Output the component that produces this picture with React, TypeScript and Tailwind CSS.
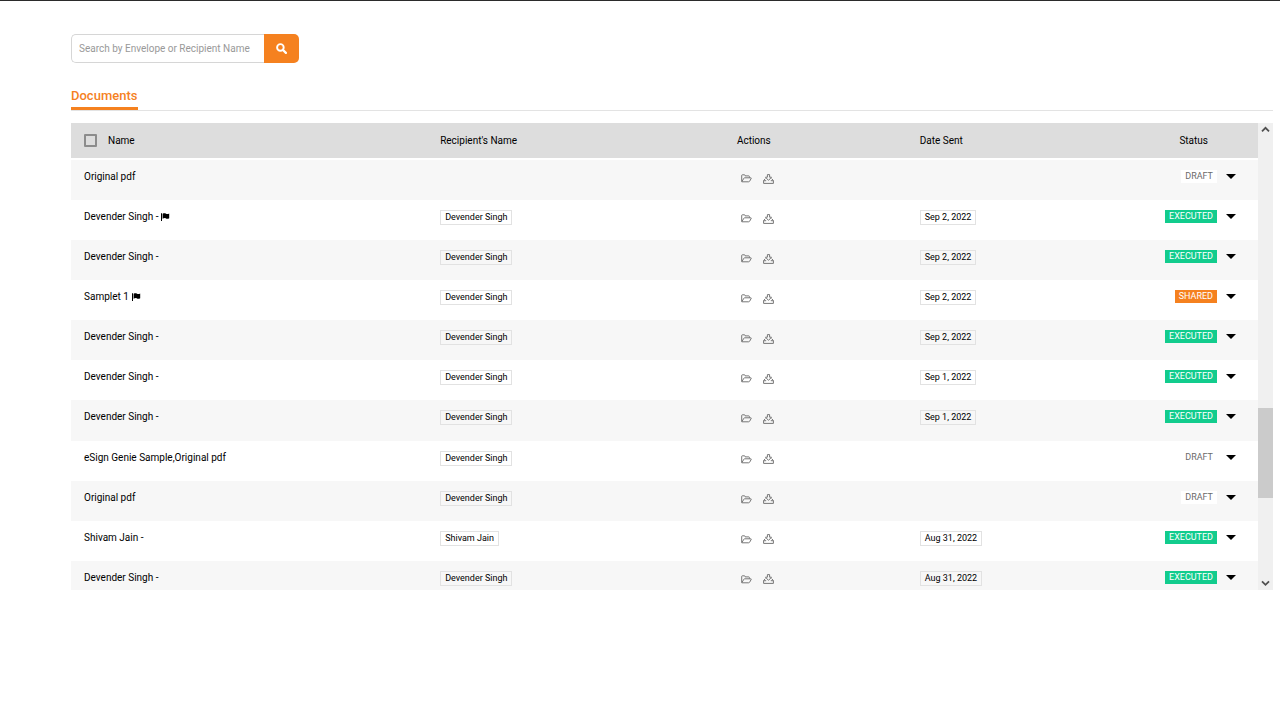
import { useState } from "react";

type Status = "DRAFT" | "EXECUTED" | "SHARED";
type Doc = { name: string; flagged?: boolean; recipient?: string; sent?: string; status: Status };

const DOCS: Doc[] = [
  { name: "Original pdf", status: "DRAFT" },
  { name: "Devender Singh -", flagged: true, recipient: "Devender Singh", sent: "Sep 2, 2022", status: "EXECUTED" },
  { name: "Devender Singh -", recipient: "Devender Singh", sent: "Sep 2, 2022", status: "EXECUTED" },
  { name: "Samplet 1", flagged: true, recipient: "Devender Singh", sent: "Sep 2, 2022", status: "SHARED" },
  { name: "Devender Singh -", recipient: "Devender Singh", sent: "Sep 2, 2022", status: "EXECUTED" },
  { name: "Devender Singh -", recipient: "Devender Singh", sent: "Sep 1, 2022", status: "EXECUTED" },
  { name: "Devender Singh -", recipient: "Devender Singh", sent: "Sep 1, 2022", status: "EXECUTED" },
  { name: "eSign Genie Sample,Original pdf", recipient: "Devender Singh", status: "DRAFT" },
  { name: "Original pdf", recipient: "Devender Singh", status: "DRAFT" },
  { name: "Shivam Jain -", recipient: "Shivam Jain", sent: "Aug 31, 2022", status: "EXECUTED" },
  { name: "Devender Singh -", recipient: "Devender Singh", sent: "Aug 31, 2022", status: "EXECUTED" },
];

const STATUS_STYLES: Record<Status, string> = {
  DRAFT: "bg-white text-[#6b6b6b]",
  EXECUTED: "bg-[#12cc8d] text-white",
  SHARED: "bg-[#f5811f] text-white",
};

function SearchIcon() {
  return (
    <svg width="11" height="11" viewBox="0 0 11 11" fill="none" stroke="currentColor" aria-hidden="true">
      <circle cx="4.4" cy="4.4" r="3.3" strokeWidth="1.9" />
      <path d="M7 7l2.9 2.9" strokeWidth="2.2" strokeLinecap="round" />
    </svg>
  );
}

function FlagIcon() {
  return (
    <svg width="9" height="9" viewBox="0 0 9 9" fill="currentColor" role="img" aria-label="Flagged">
      <path d="M0 .3h1v7.600H0z" />
      <path d="M1.600.8C2.900 0 4.100.2 5 .7c1 .5 2 .4 3.200-.3v4.800c-1.300.8-2.400.7-3.300.2-1-.5-2.100-.4-3.300.4z" />
    </svg>
  );
}

function FolderOpenIcon() {
  return (
    <svg width="11" height="9" viewBox="0 0 11 9" fill="none" stroke="currentColor" strokeLinejoin="round" aria-hidden="true">
      <path d="M.7 7.600V1.400c0-.3.2-.600.600-.600h2.200c.3 0 .6.300.6.600v.5h3.700c.4 0 .6.300.6.600v1.200" />
      <path d="M.8 7.800l2-3.500c.2-.4.500-.5.900-.5h6.100c.5 0 .6.300.400.600L8.600 7.300c-.2.300-.5.500-.9.500z" />
    </svg>
  );
}

function DownloadIcon() {
  return (
    <svg width="11" height="10" viewBox="0 0 11 10" fill="none" stroke="currentColor" strokeLinejoin="round" aria-hidden="true">
      <path d="M4.400.6h2.200v2.600h1.900L5.500 6.400 2.500 3.200h1.900z" />
      <path d="M2.400 4.600L.6 6.500v2.900h9.800V6.500L8.600 4.600M.8 6.700h2.400M7.800 6.700h2.400" />
    </svg>
  );
}

function Chevron({ down = false }: { down?: boolean }) {
  return (
    <svg width="9" height="7" viewBox="0 0 9 7" fill="none" stroke="#505050" strokeWidth="1.8" aria-hidden="true">
      <path d={down ? "M1 1.300l3.500 3.500L8 1.300" : "M1 5.300l3.500-3.500L8 5.300"} />
    </svg>
  );
}

function Chip({ children }: { children: string }) {
  return (
    <span className="inline-block h-[15px] border border-[#e2e2e2] px-1 text-[9px] leading-[13px] whitespace-nowrap">
      {children}
    </span>
  );
}

function DocRow({ doc }: { doc: Doc }) {
  return (
    <tr className="align-top odd:bg-[#f7f7f7] even:bg-white">
      <td className="h-10 pt-[9px] pl-[13px]">
        <div className="flex h-4 items-center gap-[3px]">
          <span>{doc.name}</span>
          {doc.flagged && <FlagIcon />}
        </div>
      </td>
      <td className="pt-[10px]">
        <div className="flex">{doc.recipient && <Chip>{doc.recipient}</Chip>}</div>
      </td>
      <td className="pt-[13px] pl-1">
        <div className="flex h-[11px] items-center gap-[11px] text-[#777]">
          <button type="button" aria-label="Open folder">
            <FolderOpenIcon />
          </button>
          <button type="button" aria-label="Download">
            <DownloadIcon />
          </button>
        </div>
      </td>
      <td className="pt-[10px]">
        <div className="flex">{doc.sent && <Chip>{doc.sent}</Chip>}</div>
      </td>
      <td className="pt-[10px] pr-[22px]">
        <div className="flex h-[13px] items-center justify-end gap-[9px]">
          <span className={`px-1 text-[9px] leading-[13px] ${STATUS_STYLES[doc.status]}`}>{doc.status}</span>
          <button type="button" aria-label="More actions">
            <svg width="10" height="5" viewBox="0 0 10 5" aria-hidden="true">
              <path d="M0 0h10L5 5z" />
            </svg>
          </button>
        </div>
      </td>
    </tr>
  );
}

export default function App() {
  const [query, setQuery] = useState("");

  return (
    <main className="min-h-screen border-t border-[#2b2b2b] bg-white pt-[33px] pr-[7px] pl-[71px] font-[Roboto,sans-serif] text-[10px] leading-4 text-black">
      <form className="flex h-[29px]" onSubmit={(e) => e.preventDefault()}>
        <input
          type="text"
          aria-label="Search by Envelope or Recipient Name"
          placeholder="Search by Envelope or Recipient Name"
          value={query}
          onChange={(e) => setQuery(e.target.value)}
          className="w-[193px] rounded-l-[5px] border border-r-0 border-[#d6d6d6] px-[7px] outline-none placeholder:text-[#999]"
        />
        <button
          type="submit"
          aria-label="Search"
          className="flex w-[35px] items-center justify-center rounded-r-[5px] bg-[#f5811f] text-white"
        >
          <SearchIcon />
        </button>
      </form>

      <nav className="mt-[23px] flex h-[25px] border-b border-[#e3e3e3]">
        <a href="#documents" className="h-6 border-b-3 border-[#f5811f] pr-px text-[13px] leading-[19px] font-medium text-[#f5811f]">
          Documents
        </a>
      </nav>

      <section id="documents" className="mt-3 flex h-[467px] overflow-hidden">
        <div className="flex-1 overflow-hidden">
          <table className="h-[478px] w-full table-fixed border-separate border-spacing-0 text-left">
            <colgroup>
              <col className="w-[31.1%]" />
              <col className="w-[25%]" />
              <col className="w-[15.4%]" />
              <col className="w-[14%]" />
              <col />
            </colgroup>
            <thead>
              <tr className="h-[37px] bg-[#ddd] *:border-b-2 *:border-white *:font-normal">
                <th className="pl-[13px]">
                  <label className="flex items-center gap-[11px]">
                    <input
                      type="checkbox"
                      className="size-[13px] appearance-none rounded-[1px] border-2 border-[#8c8c8c] checked:bg-[#8c8c8c]"
                    />
                    Name
                  </label>
                </th>
                <th>Recipient's Name</th>
                <th>Actions</th>
                <th>Date Sent</th>
                <th className="pr-[50px] text-right">Status</th>
              </tr>
            </thead>
            <tbody>
              {DOCS.map((doc, i) => (
                <DocRow key={i} doc={doc} />
              ))}
            </tbody>
          </table>
        </div>

        <div className="flex w-[15px] flex-col items-center bg-[#f0f0f0]">
          <button type="button" aria-label="Scroll up" className="flex h-[13px] items-center">
            <Chevron />
          </button>
          {/* track is split so that the thumb sits at the scrolled position */}
          <div className="w-full flex-[272]" />
          <div className="h-[90px] w-full bg-[#cbcbcb]" />
          <div className="flex-[79]" />
          <button type="button" aria-label="Scroll down" className="flex h-[13px] items-center">
            <Chevron down />
          </button>
        </div>
      </section>
    </main>
  );
}
